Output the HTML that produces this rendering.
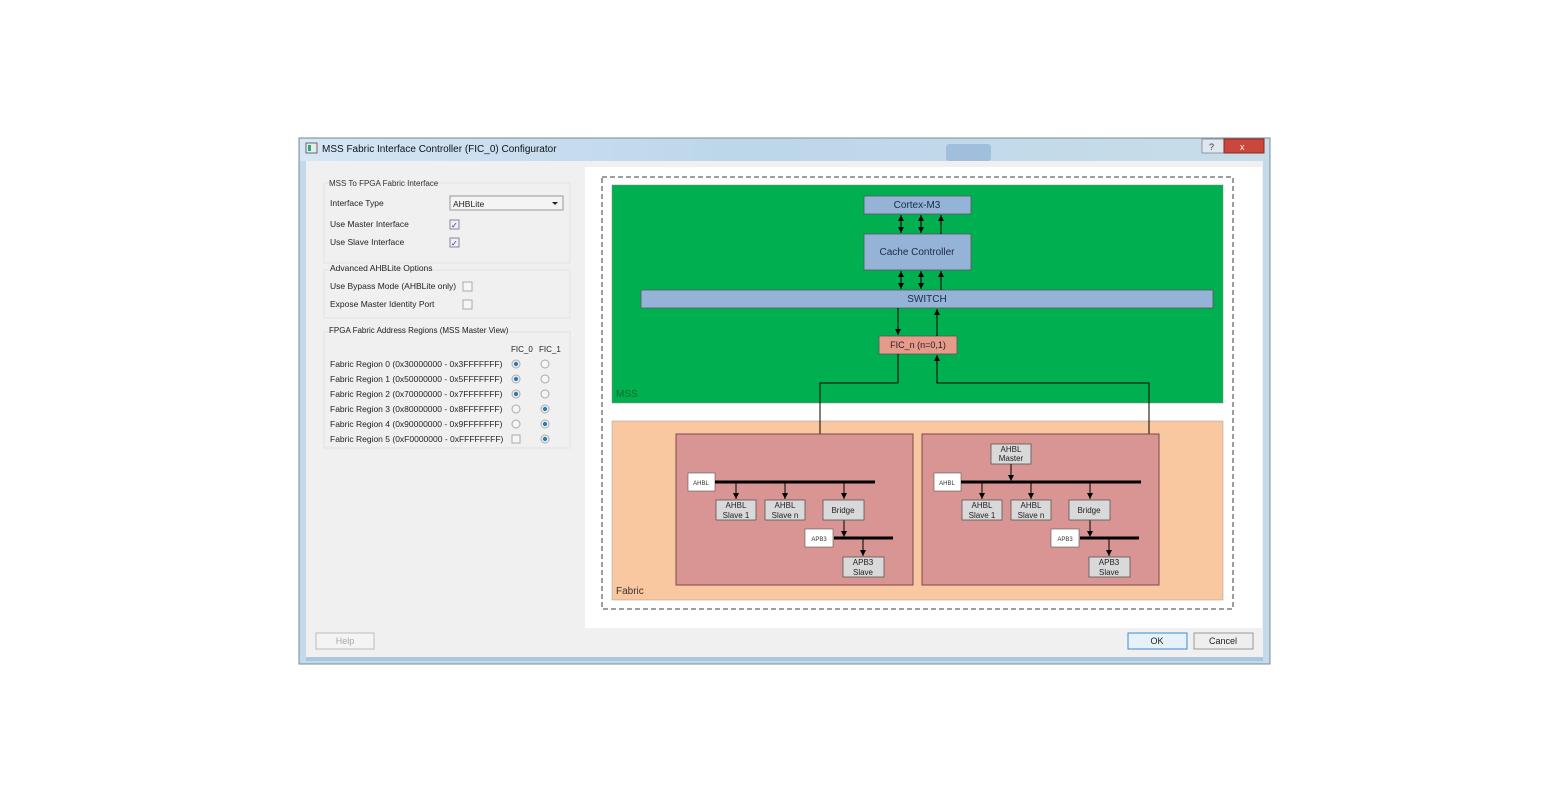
<!DOCTYPE html>
<html><head><style>
body{margin:0;background:#fff;}
svg{display:block}
text{font-family:"Liberation Sans",sans-serif;}
</style></head><body>
<svg width="1568" height="802" viewBox="0 0 1568 802" xmlns="http://www.w3.org/2000/svg">
<defs>
<marker id="a" markerWidth="7" markerHeight="6" refX="6" refY="3" orient="auto-start-reverse" markerUnits="userSpaceOnUse"><path d="M0,0 L6,3 L0,6 Z" fill="#000"/></marker>
<linearGradient id="tb" x1="0" x2="1"><stop offset="0" stop-color="#d6e6f4"/><stop offset="0.45" stop-color="#bcd6ea"/><stop offset="1" stop-color="#c8dde8"/></linearGradient>
</defs>
<rect x="299" y="138" width="971" height="526" fill="#c4d9ea" stroke="#7a8a99"/>
<rect x="300" y="139" width="969" height="22" fill="url(#tb)"/>
<rect x="946" y="144" width="45" height="17" rx="3" fill="#9fbfdc"/>
<rect x="306" y="143" width="11" height="10" fill="#e8ece8" stroke="#667"/>
<rect x="308" y="145" width="3" height="6" fill="#2a7"/>
<text x="322" y="152" font-size="10" fill="#111">MSS Fabric Interface Controller (FIC_0) Configurator</text>
<rect x="1202" y="139" width="22" height="14" fill="#dfe6ee" stroke="#8899aa"/>
<text x="1209" y="150" font-size="9" fill="#333">?</text>
<rect x="1224" y="139" width="40" height="14" fill="#c9473c" stroke="#8a2a22"/>
<text x="1240" y="150" font-size="9" fill="#fff">x</text>
<rect x="306" y="161" width="957" height="497" fill="#f0f0f0"/>
<rect x="306" y="657" width="957" height="4" fill="#aac6e0"/>
<g font-size="8.5" fill="#222">
<rect x="324" y="183" width="246" height="80" fill="none" stroke="#e2e2e2"/>
<text x="329" y="186" font-size="8" fill="#333">MSS To FPGA Fabric Interface</text>
<text x="330" y="206">Interface Type</text>
<rect x="450" y="196" width="113" height="14" fill="#f4f4f4" stroke="#999"/>
<text x="453" y="207">AHBLite</text>
<path d="M552,202 l6,0 l-3,3z" fill="#222"/>
<text x="330" y="227">Use Master Interface</text>
<rect x="450" y="220" width="9" height="9" fill="#eef" stroke="#888"/><text x="451" y="228" font-size="8" fill="#336">✓</text>
<text x="330" y="245">Use Slave Interface</text>
<rect x="450" y="238" width="9" height="9" fill="#eef" stroke="#888"/><text x="451" y="246" font-size="8" fill="#336">✓</text>
<rect x="324" y="270" width="246" height="48" fill="none" stroke="#e2e2e2"/>
<text x="330" y="271">Advanced AHBLite Options</text>
<text x="330" y="289">Use Bypass Mode (AHBLite only)</text>
<rect x="463" y="282" width="9" height="9" fill="#f6f6f6" stroke="#aaa"/>
<text x="330" y="307">Expose Master Identity Port</text>
<rect x="463" y="300" width="9" height="9" fill="#f6f6f6" stroke="#aaa"/>
<rect x="324" y="332" width="246" height="116" fill="none" stroke="#e2e2e2"/>
<text x="329" y="333" font-size="8">FPGA Fabric Address Regions (MSS Master View)</text>
<text x="511" y="352" font-size="8">FIC_0</text><text x="539" y="352" font-size="8">FIC_1</text>
<text x="330" y="367">Fabric Region 0 (0x30000000 - 0x3FFFFFFF)</text>
<text x="330" y="382">Fabric Region 1 (0x50000000 - 0x5FFFFFFF)</text>
<text x="330" y="397">Fabric Region 2 (0x70000000 - 0x7FFFFFFF)</text>
<text x="330" y="412">Fabric Region 3 (0x80000000 - 0x8FFFFFFF)</text>
<text x="330" y="427">Fabric Region 4 (0x90000000 - 0x9FFFFFFF)</text>
<text x="330" y="442">Fabric Region 5 (0xF0000000 - 0xFFFFFFFF)</text>
</g>
<g stroke="#aaa" fill="#f6f6f6">
<circle cx="516" cy="364" r="4"/><circle cx="545" cy="364" r="4"/>
<circle cx="516" cy="379" r="4"/><circle cx="545" cy="379" r="4"/>
<circle cx="516" cy="394" r="4"/><circle cx="545" cy="394" r="4"/>
<circle cx="516" cy="409" r="4"/><circle cx="545" cy="409" r="4"/>
<circle cx="516" cy="424" r="4"/><circle cx="545" cy="424" r="4"/>
<rect x="512" y="435" width="8" height="8"/><circle cx="545" cy="439" r="4"/>
</g>
<g fill="#2b7cb0">
<circle cx="516" cy="364" r="2.2"/><circle cx="516" cy="379" r="2.2"/><circle cx="516" cy="394" r="2.2"/>
<circle cx="545" cy="409" r="2.2"/><circle cx="545" cy="424" r="2.2"/><circle cx="545" cy="439" r="2.2"/>
</g>
<rect x="585" y="167" width="677" height="461" fill="#fff"/>
<rect x="602" y="177" width="631" height="432" fill="none" stroke="#666" stroke-width="1.3" stroke-dasharray="5,3"/>
<rect x="612" y="185" width="611" height="218" fill="#00b050" stroke="#888" stroke-width="0.5"/>
<text x="616" y="397" font-size="10" fill="#0a6a30">MSS</text>
<rect x="612" y="421" width="611" height="179" fill="#fac8a0" stroke="#999" stroke-width="0.5"/>
<text x="616" y="594" font-size="10" fill="#333">Fabric</text>
<g fill="#95b3d7" stroke="#555" stroke-width="0.8">
<rect x="864" y="196" width="107" height="18"/>
<rect x="864" y="234" width="107" height="36"/>
<rect x="641" y="290" width="572" height="18"/>
</g>
<g font-size="10" fill="#1a2a44" text-anchor="middle">
<text x="917" y="208">Cortex-M3</text>
<text x="917" y="255">Cache Controller</text>
<text x="927" y="302">SWITCH</text>
</g>
<rect x="879" y="336" width="78" height="18" fill="#e69a8a" stroke="#555" stroke-width="0.8"/>
<text x="918" y="348" font-size="9" fill="#222" text-anchor="middle">FIC_n (n=0,1)</text>
<g stroke="#000" stroke-width="1" fill="none">
<path d="M901,215 V233" marker-start="url(#a)" marker-end="url(#a)"/>
<path d="M921,215 V233" marker-start="url(#a)" marker-end="url(#a)"/>
<path d="M941,234 V215" marker-end="url(#a)"/>
<path d="M901,271 V289" marker-start="url(#a)" marker-end="url(#a)"/>
<path d="M921,271 V289" marker-start="url(#a)" marker-end="url(#a)"/>
<path d="M941,290 V271" marker-end="url(#a)"/>
<path d="M898,308 V335" marker-end="url(#a)"/>
<path d="M937,336 V309" marker-end="url(#a)"/>
<path d="M898,354 V383 H820 V481" marker-end="url(#a)"/>
<path d="M1131,482 V500 H1149 V383 H937 V355" marker-end="url(#a)"/>
</g>
<g id="s">
<rect x="676" y="434" width="237" height="151" fill="#d99594" stroke="#7a4a4a"/>
<rect x="688" y="473" width="27" height="18" fill="#fff" stroke="#555" stroke-width="0.6"/>
<text x="701" y="485" font-size="6" fill="#333" text-anchor="middle">AHBL</text>
<path d="M715,482 H875" stroke="#000" stroke-width="3"/>
<g stroke="#000" fill="none"><path d="M736,482 V499" marker-end="url(#a)"/><path d="M785,482 V499" marker-end="url(#a)"/><path d="M844,482 V499" marker-end="url(#a)"/><path d="M844,520 V537" marker-end="url(#a)"/><path d="M863,538 V556" marker-end="url(#a)"/></g>
<g fill="#d9d9d9" stroke="#555" stroke-width="0.8">
<rect x="716" y="500" width="40" height="20"/><rect x="765" y="500" width="40" height="20"/><rect x="823" y="500" width="41" height="20"/><rect x="843" y="557" width="41" height="20"/>
</g>
<g font-size="8" fill="#222" text-anchor="middle">
<text x="736" y="508">AHBL</text><text x="736" y="518">Slave 1</text>
<text x="785" y="508">AHBL</text><text x="785" y="518">Slave n</text>
<text x="843" y="513">Bridge</text>
<text x="863" y="565">APB3</text><text x="863" y="575">Slave</text>
</g>
<path d="M834,538 H893" stroke="#000" stroke-width="3"/>
<rect x="805" y="529" width="28" height="18" fill="#fff" stroke="#555" stroke-width="0.6"/>
<text x="819" y="541" font-size="6" fill="#333" text-anchor="middle">APB3</text>
</g>
<use href="#s" x="246"/>
<rect x="991" y="444" width="40" height="20" fill="#d9d9d9" stroke="#555" stroke-width="0.8"/>
<text x="1011" y="452" font-size="8" fill="#222" text-anchor="middle">AHBL</text><text x="1011" y="461" font-size="8" fill="#222" text-anchor="middle">Master</text>
<path d="M1011,464 V481" stroke="#000" marker-end="url(#a)"/>
<path d="M1121,482 H1141" stroke="#000" stroke-width="3"/>
<rect x="316" y="633" width="58" height="16" fill="#f4f4f4" stroke="#bbb"/>
<text x="345" y="644" font-size="9" fill="#aaa" text-anchor="middle">Help</text>
<rect x="1128" y="633" width="59" height="16" fill="#e6f1fa" stroke="#3c8ccf"/>
<text x="1157" y="644" font-size="9" fill="#222" text-anchor="middle">OK</text>
<rect x="1194" y="633" width="59" height="16" fill="#eee" stroke="#999"/>
<text x="1223" y="644" font-size="9" fill="#222" text-anchor="middle">Cancel</text>
</svg>
</body></html>
